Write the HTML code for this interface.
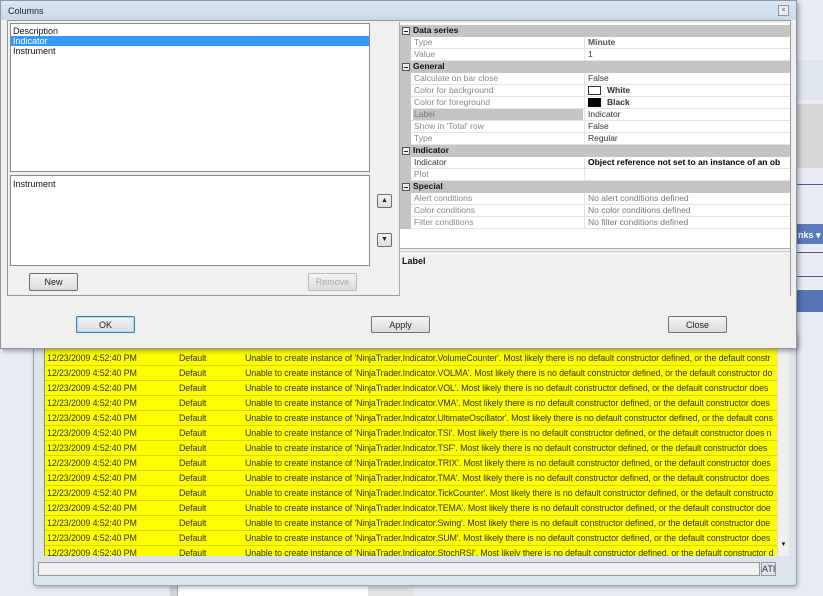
<!DOCTYPE html>
<html><head><meta charset="utf-8"><style>
*{margin:0;padding:0;box-sizing:border-box}
body{width:823px;height:596px;overflow:hidden;background:#e9edf3;font-family:"Liberation Sans",sans-serif;font-size:9px;position:relative}
.abs{position:absolute}
.bgwin{left:33px;top:330px;width:764px;height:256px;background:#dde4ec;border:1px solid #9aa6b3;border-radius:4px;box-shadow:1px 2px 4px rgba(0,0,0,.25)}
.log{left:44px;top:344px;width:733px;height:212px;background:#ffff00;overflow:hidden;border-left:1px solid #888}
.row{position:absolute;left:0;height:15px;width:733px;border-bottom:1px solid #d8d800;white-space:nowrap;color:#333;font-size:8.9px;line-height:14px;letter-spacing:-.12px}
.row span{position:absolute;top:0}
.dlg{left:0;top:0;width:797px;height:349px;background:#f0f0f0;border:1px solid #8c98a6;box-shadow:2px 2px 5px rgba(0,0,0,.35)}
.title{left:0;top:0;width:795px;height:19px;background:linear-gradient(#dbe6f3,#c9d8ea);color:#222;font-size:9px;padding:5px 0 0 7px}
.list{background:#fff;border:1px solid #8a8a8a}
.btn{border:1px solid #707070;border-radius:2px;background:linear-gradient(#f4f4f4,#dcdcdc);text-align:center;font-size:9px;line-height:16px;color:#222}
.pg .r{position:absolute;left:0;width:390px;height:12px;line-height:11px;font-size:8.5px}
.hd{background:#c4c4c4;font-weight:bold;color:#111;padding-left:13px}
.it{background:#fff;border-bottom:1px solid #e4e4e4}
.it .n{position:absolute;left:13px;color:#888;width:170px;height:11px;padding-left:1px}
.it .v{position:absolute;left:184px;padding-left:3px;border-left:1px solid #e4e4e4;height:11px;width:206px;color:#333}
.gut{position:absolute;left:0;top:0;width:11px;height:12px;background:#c4c4c4}
.mn{position:absolute;left:2px;top:2px;width:8px;height:8px;border:1px solid #555;background:#eee}
.mn:after{content:"";position:absolute;left:1px;top:3px;width:4px;height:1px;background:#222}
</style></head><body>
<div class="abs" style="left:0;top:0;width:823px;height:596px;background:#e9edf3"></div>
<div class="abs" style="left:797px;top:60px;width:26px;height:40px;background:#dfe6ef"></div>
<div class="abs" style="left:797px;top:104px;width:26px;height:64px;background:#d8d8d8"></div>
<div class="abs" style="left:797px;top:184px;width:26px;height:1px;background:#4a5a8a"></div>
<div class="abs" style="left:797px;top:224px;width:26px;height:20px;background:#5b7bbb;color:#fff;font-size:9px;font-weight:bold;padding:6px 0 0 1px">nks ▾</div>
<div class="abs" style="left:797px;top:252px;width:26px;height:1px;background:#4a5a8a"></div>
<div class="abs" style="left:797px;top:276px;width:26px;height:1px;background:#4a5a8a"></div>
<div class="abs" style="left:797px;top:290px;width:26px;height:22px;background:#5575b5"></div>
<div class="abs" style="left:170px;top:585px;width:8px;height:11px;background:#d0d4d8;border-right:1px solid #aaa"></div>
<div class="abs" style="left:178px;top:585px;width:190px;height:11px;background:#fff"></div>
<div class="abs" style="left:368px;top:585px;width:45px;height:11px;background:#e4e4e4"></div>

<div class="abs bgwin"></div>
<div class="abs log">
<div class="row" style="top:7px"><span style="left:2px">12/23/2009 4:52:40 PM</span><span style="left:134px">Default</span><span style="left:200px">Unable to create instance of 'NinjaTrader.Indicator.VolumeCounter'. Most likely there is no default constructor defined, or the default constr</span></div>
<div class="row" style="top:22px"><span style="left:2px">12/23/2009 4:52:40 PM</span><span style="left:134px">Default</span><span style="left:200px">Unable to create instance of 'NinjaTrader.Indicator.VOLMA'. Most likely there is no default constructor defined, or the default constructor do</span></div>
<div class="row" style="top:37px"><span style="left:2px">12/23/2009 4:52:40 PM</span><span style="left:134px">Default</span><span style="left:200px">Unable to create instance of 'NinjaTrader.Indicator.VOL'. Most likely there is no default constructor defined, or the default constructor does</span></div>
<div class="row" style="top:52px"><span style="left:2px">12/23/2009 4:52:40 PM</span><span style="left:134px">Default</span><span style="left:200px">Unable to create instance of 'NinjaTrader.Indicator.VMA'. Most likely there is no default constructor defined, or the default constructor does</span></div>
<div class="row" style="top:67px"><span style="left:2px">12/23/2009 4:52:40 PM</span><span style="left:134px">Default</span><span style="left:200px">Unable to create instance of 'NinjaTrader.Indicator.UltimateOscillator'. Most likely there is no default constructor defined, or the default cons</span></div>
<div class="row" style="top:82px"><span style="left:2px">12/23/2009 4:52:40 PM</span><span style="left:134px">Default</span><span style="left:200px">Unable to create instance of 'NinjaTrader.Indicator.TSI'. Most likely there is no default constructor defined, or the default constructor does n</span></div>
<div class="row" style="top:97px"><span style="left:2px">12/23/2009 4:52:40 PM</span><span style="left:134px">Default</span><span style="left:200px">Unable to create instance of 'NinjaTrader.Indicator.TSF'. Most likely there is no default constructor defined, or the default constructor does</span></div>
<div class="row" style="top:112px"><span style="left:2px">12/23/2009 4:52:40 PM</span><span style="left:134px">Default</span><span style="left:200px">Unable to create instance of 'NinjaTrader.Indicator.TRIX'. Most likely there is no default constructor defined, or the default constructor does</span></div>
<div class="row" style="top:127px"><span style="left:2px">12/23/2009 4:52:40 PM</span><span style="left:134px">Default</span><span style="left:200px">Unable to create instance of 'NinjaTrader.Indicator.TMA'. Most likely there is no default constructor defined, or the default constructor does</span></div>
<div class="row" style="top:142px"><span style="left:2px">12/23/2009 4:52:40 PM</span><span style="left:134px">Default</span><span style="left:200px">Unable to create instance of 'NinjaTrader.Indicator.TickCounter'. Most likely there is no default constructor defined, or the default constructo</span></div>
<div class="row" style="top:157px"><span style="left:2px">12/23/2009 4:52:40 PM</span><span style="left:134px">Default</span><span style="left:200px">Unable to create instance of 'NinjaTrader.Indicator.TEMA'. Most likely there is no default constructor defined, or the default constructor doe</span></div>
<div class="row" style="top:172px"><span style="left:2px">12/23/2009 4:52:40 PM</span><span style="left:134px">Default</span><span style="left:200px">Unable to create instance of 'NinjaTrader.Indicator.Swing'. Most likely there is no default constructor defined, or the default constructor doe</span></div>
<div class="row" style="top:187px"><span style="left:2px">12/23/2009 4:52:40 PM</span><span style="left:134px">Default</span><span style="left:200px">Unable to create instance of 'NinjaTrader.Indicator.SUM'. Most likely there is no default constructor defined, or the default constructor does</span></div>
<div class="row" style="top:202px"><span style="left:2px">12/23/2009 4:52:40 PM</span><span style="left:134px">Default</span><span style="left:200px">Unable to create instance of 'NinjaTrader.Indicator.StochRSI'. Most likely there is no default constructor defined, or the default constructor d</span></div>
</div>
<div class="abs" style="left:777px;top:344px;width:12px;height:212px;background:#f0f0f0;border-left:1px solid #ddd;font-size:7px;padding-top:196px;text-align:center">▾</div>
<div class="abs" style="left:38px;top:562px;width:722px;height:14px;background:#f0f0f0;border:1px solid #999"></div>
<div class="abs" style="left:761px;top:562px;width:15px;height:14px;border:1px solid #999;font-size:9px;line-height:12px;text-align:center;color:#333">ATI</div>

<div class="abs dlg">
<div class="abs title">Columns</div>
<div class="abs" style="left:777px;top:4px;width:11px;height:11px;border:1px solid #8a96a6;background:#e8eef6;font-size:7px;line-height:9px;text-align:center;color:#555">×</div>
<div class="abs" style="left:6px;top:19px;width:784px;height:276px;border:1px solid #9a9a9a;background:#f0f0f0"></div>
<div class="abs list" style="left:9px;top:22px;width:360px;height:149px">
<div style="padding:2px 0 0 2px;line-height:10px;color:#111">Description</div>
<div style="background:#3399ff;color:#fff;line-height:10px;padding-left:2px">Indicator</div>
<div style="padding-left:2px;line-height:10px;color:#111">Instrument</div>
</div>
<div class="abs list" style="left:9px;top:174px;width:360px;height:91px"><div style="padding:3px 0 0 2px;color:#111">Instrument</div></div>
<div class="abs btn" style="left:376px;top:193px;width:15px;height:14px;font-size:7px;line-height:12px">▲</div>
<div class="abs btn" style="left:376px;top:232px;width:15px;height:14px;font-size:7px;line-height:12px">▼</div>
<div class="abs btn" style="left:28px;top:272px;width:49px;height:18px">New</div>
<div class="abs btn" style="left:307px;top:272px;width:49px;height:18px;color:#aaa;border-color:#bbb">Remove</div>
<div class="abs" style="left:398px;top:21px;width:1px;height:274px;background:#aaa"></div>
<div class="abs pg" style="left:399px;top:22px;width:390px;height:226px;background:#fff;border-bottom:1px solid #aaa">
<div class="r hd" style="top:2px"><div class="mn"></div>Data series</div>
<div class="r it" style="top:14px"><div class="gut"></div><div class="n">Type</div><div class="v" style="font-weight:bold;color:#555">Minute</div></div>
<div class="r it" style="top:26px"><div class="gut"></div><div class="n">Value</div><div class="v">1</div></div>
<div class="r hd" style="top:38px"><div class="mn"></div>General</div>
<div class="r it" style="top:50px"><div class="gut"></div><div class="n">Calculate on bar close</div><div class="v">False</div></div>
<div class="r it" style="top:62px"><div class="gut"></div><div class="n">Color for background</div><div class="v"><span style="display:inline-block;width:13px;height:9px;border:1px solid #333;vertical-align:top;margin:1px 6px 0 0;background:#fff"></span><b>White</b></div></div>
<div class="r it" style="top:74px"><div class="gut"></div><div class="n">Color for foreground</div><div class="v"><span style="display:inline-block;width:13px;height:9px;background:#000;vertical-align:top;margin:1px 6px 0 0"></span><b>Black</b></div></div>
<div class="r it" style="top:86px"><div class="gut"></div><div class="n" style="background:#c4c4c4;color:#777">Label</div><div class="v">Indicator</div></div>
<div class="r it" style="top:98px"><div class="gut"></div><div class="n">Show in 'Total' row</div><div class="v">False</div></div>
<div class="r it" style="top:110px"><div class="gut"></div><div class="n">Type</div><div class="v">Regular</div></div>
<div class="r hd" style="top:122px"><div class="mn"></div>Indicator</div>
<div class="r it" style="top:134px"><div class="gut"></div><div class="n" style="color:#333">Indicator</div><div class="v" style="font-weight:bold;color:#000;white-space:nowrap;overflow:hidden">Object reference not set to an instance of an ob</div></div>
<div class="r it" style="top:146px"><div class="gut"></div><div class="n">Plot</div><div class="v"></div></div>
<div class="r hd" style="top:158px"><div class="mn"></div>Special</div>
<div class="r it" style="top:170px"><div class="gut"></div><div class="n">Alert conditions</div><div class="v" style="color:#777">No alert conditions defined</div></div>
<div class="r it" style="top:182px"><div class="gut"></div><div class="n">Color conditions</div><div class="v" style="color:#777">No color conditions defined</div></div>
<div class="r it" style="top:194px"><div class="gut"></div><div class="n">Filter conditions</div><div class="v" style="color:#777">No filter conditions defined</div></div>
</div>
<div class="abs" style="left:399px;top:250px;width:390px;height:45px;background:#f0f0f0;font-weight:bold;font-size:9px;padding:4px 0 0 2px;color:#111;border-top:1px solid #ccc">Label</div>
<div class="abs btn" style="left:75px;top:315px;width:59px;height:17px;border-color:#3c7fb1;box-shadow:inset 0 0 0 1px #a8dcf5">OK</div>
<div class="abs btn" style="left:370px;top:315px;width:59px;height:17px">Apply</div>
<div class="abs btn" style="left:667px;top:315px;width:59px;height:17px">Close</div>
</div>
</body></html>
